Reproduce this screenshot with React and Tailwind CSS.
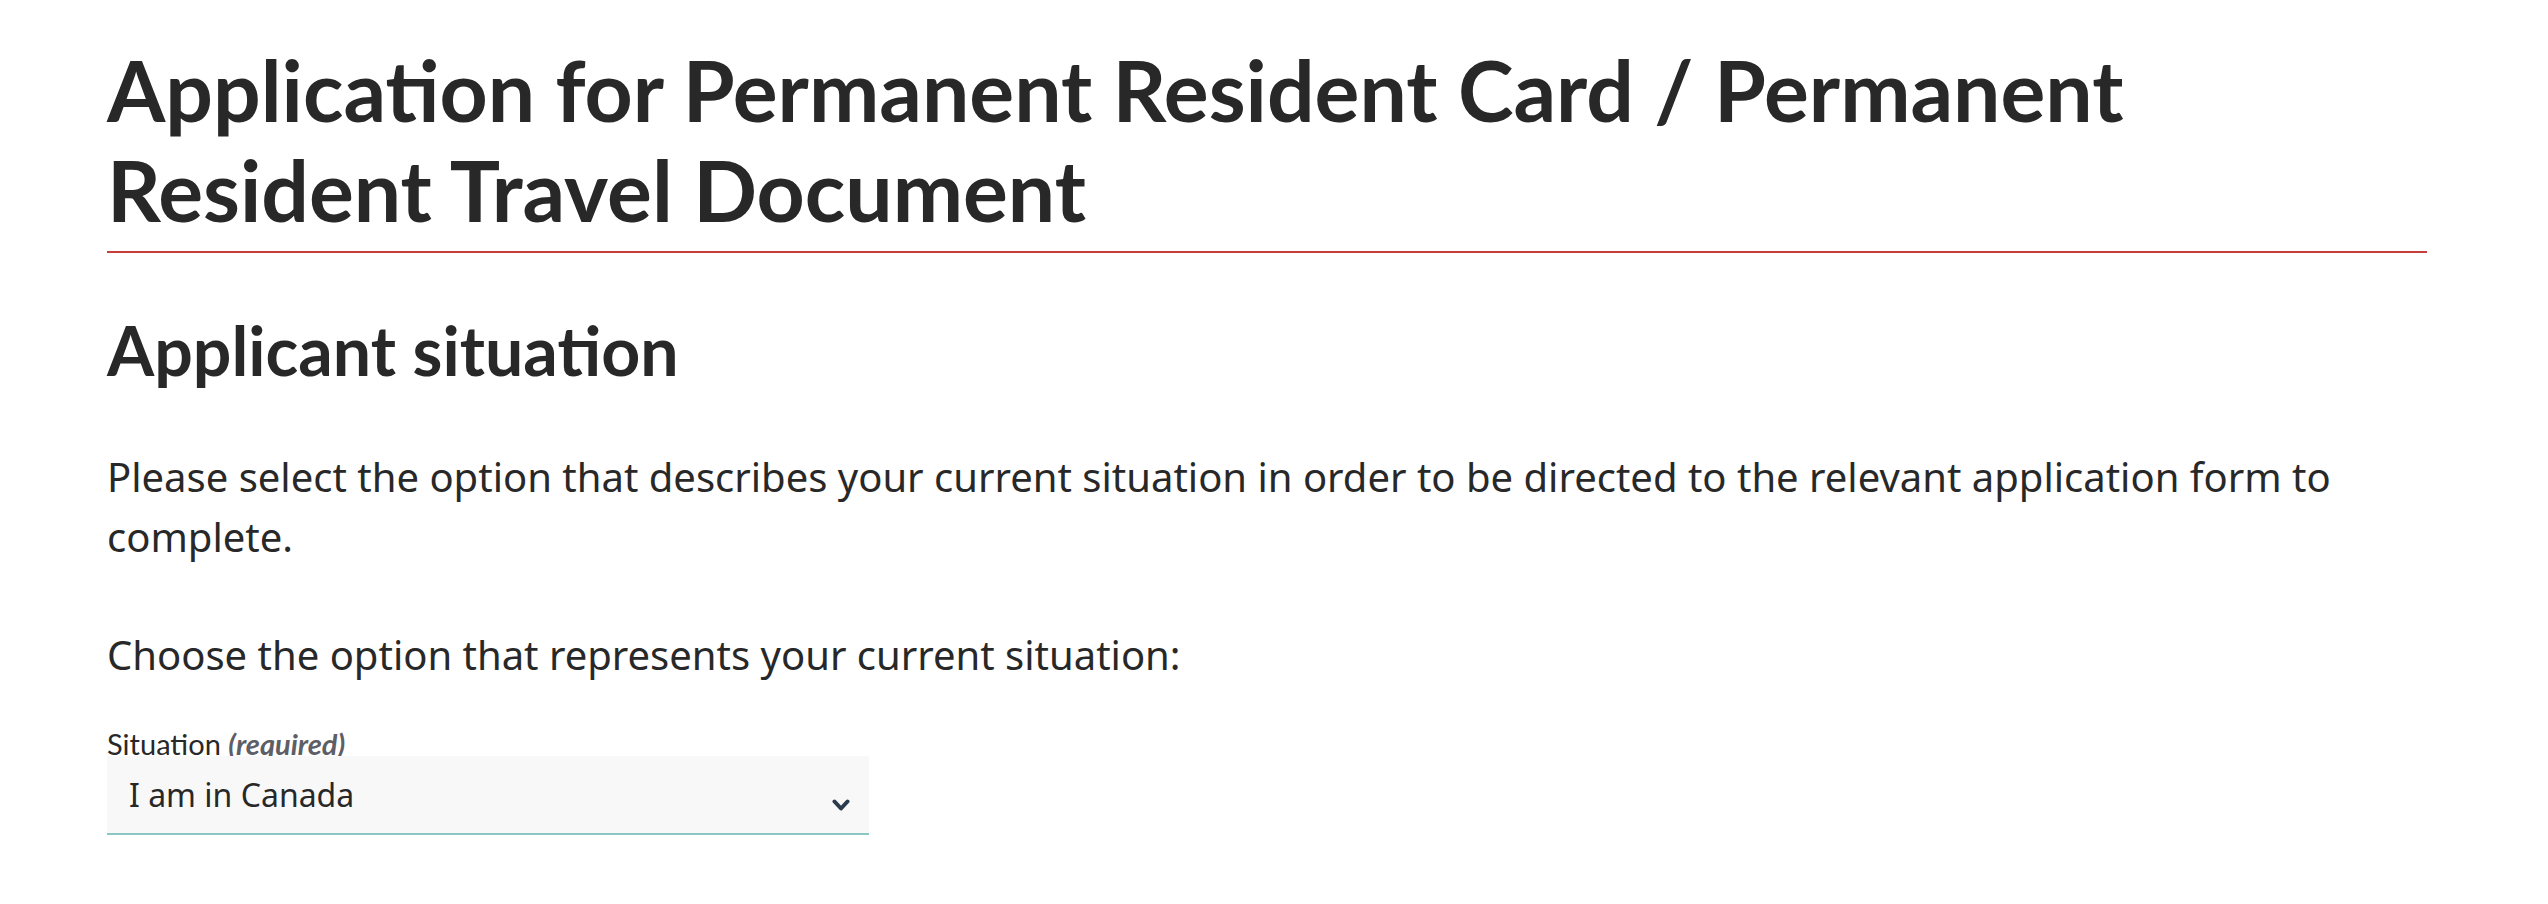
import React from "react";

function Chevron() {
  return (
    <svg width="18" height="13" viewBox="0 0 18 13" aria-hidden="true">
      <polyline points="2.5,2.5 9,9.5 15.5,2.5" fill="none" stroke="#2b3a4c" strokeWidth="4" strokeLinecap="round" strokeLinejoin="round" />
    </svg>
  );
}

export default function App() {
  return (
    <div className="min-h-[904px] w-full bg-white text-[#282828]">
      <main className="w-[2320px] ml-[107px] pt-[40px]">
        <h1 className="font-['Lato',sans-serif] font-bold text-[84px] leading-[100px] pb-[11px] border-b-2 border-[#c83c3c]">
          Application for Permanent Resident Card / Permanent
          <br />
          Resident Travel Document
        </h1>
        <h2 className="mt-[58px] font-['Lato',sans-serif] font-bold text-[68px] leading-[77px]">
          Applicant situation
        </h2>
        <p className="mt-[59px] font-['Noto_Sans',sans-serif] text-[40px] leading-[60px]">
          Please select the option that describes your current situation in order to be directed to the relevant application form to complete.
        </p>
        <p className="mt-[58px] font-['Noto_Sans',sans-serif] text-[40px] leading-[60px]">
          Choose the option that represents your current situation:
        </p>
        <label className="block mt-[46px] font-['Lato',sans-serif] text-[29px] leading-[25px]">
          Situation <span className="italic font-bold text-[#5e5e66]">(required)</span>
        </label>
        <div className="relative w-[762px]">
          <select
            defaultValue="canada"
            className="block w-full h-[79px] appearance-none bg-[#f8f8f8] border-0 border-b-2 border-[#88c7c2] pl-[22px] pr-[60px] font-['Noto_Sans',sans-serif] text-[32px] text-[#282828] outline-none"
          >
            <option value="canada">I am in Canada</option>
            <option value="outside">I am outside Canada</option>
          </select>
          <div className="pointer-events-none absolute right-[19px] top-[43px]">
            <Chevron />
          </div>
        </div>
      </main>
    </div>
  );
}
